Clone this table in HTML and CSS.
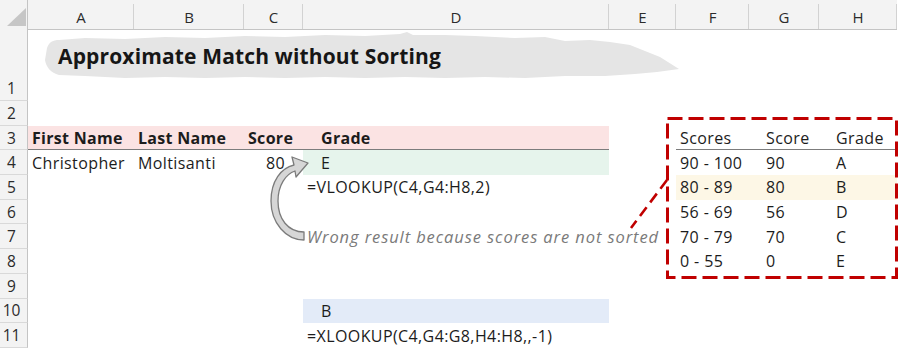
FILE: index.html
```html
<!DOCTYPE html>
<html lang="en">
<head>
<meta charset="utf-8">
<title>Approximate Match without Sorting</title>
<link rel="stylesheet" href="styles.css">
</head>
<body>
<div class="sheet">
  <div class="row colhead">
    <div class="corner"><svg width="28" height="29" viewBox="0 0 28 29"><polygon points="7,26 26,26 26,8" fill="#c6c6c6"/></svg></div>
    <div class="ch">A</div><div class="ch">B</div><div class="ch">C</div><div class="ch">D</div>
    <div class="ch">E</div><div class="ch">F</div><div class="ch">G</div><div class="ch">H</div>
  </div>

  <div class="row r1">
    <div class="rh rh1">1</div>
    <div class="title-cell">
      <svg class="brush" width="634" height="48" viewBox="0 0 634 48">
        <path d="M2 16 C4 10 8 8 14 8 L40 6 L80 7 L120 5 L160 6 L200 4 L240 5 L280 3 L320 4 L355 2 L362 0 L368 3 L400 3 L430 4 L470 6 L500 5 L520 9 L545 8 L565 10 L585 13 L600 19 L615 25 L634 37 L612 40 L590 42 L560 44 L520 44 L480 46 L440 45 L400 46 L360 45 L320 46 L280 45 L240 46 L200 45 L160 46 L120 45 L80 46 L40 44 L14 43 C6 41 1 35 0 28 Z" fill="#e5e5e5"/>
      </svg>
      <span class="title">Approximate Match without Sorting</span>
    </div>
  </div>

  <div class="row">
    <div class="rh">2</div>
    <div class="c"></div><div class="c"></div><div class="c"></div><div class="c"></div>
    <div class="c"></div><div class="c"></div><div class="c"></div><div class="c"></div>
  </div>

  <div class="row">
    <div class="rh">3</div>
    <div class="c hd b">First Name</div>
    <div class="c hd b">Last Name</div>
    <div class="c hd b">Score</div>
    <div class="c hd b ind">Grade</div>
    <div class="c"></div>
    <div class="c th">Scores</div>
    <div class="c th ind2">Score</div>
    <div class="c th ind2">Grade</div>
  </div>

  <div class="row">
    <div class="rh">4</div>
    <div class="c">Christopher</div>
    <div class="c">Moltisanti</div>
    <div class="c num">80</div>
    <div class="c green ind">E</div>
    <div class="c"></div>
    <div class="c">90 - 100</div>
    <div class="c ind2">90</div>
    <div class="c ind2">A</div>
  </div>

  <div class="row">
    <div class="rh">5</div>
    <div class="c"></div><div class="c"></div><div class="c"></div>
    <div class="c formula">=VLOOKUP(C4,G4:H8,2)</div>
    <div class="c"></div>
    <div class="c yellow">80 - 89</div>
    <div class="c yellow ind2">80</div>
    <div class="c yellow ind2">B</div>
  </div>

  <div class="row">
    <div class="rh">6</div>
    <div class="c"></div><div class="c"></div><div class="c"></div><div class="c"></div>
    <div class="c"></div>
    <div class="c">56 - 69</div>
    <div class="c ind2">56</div>
    <div class="c ind2">D</div>
  </div>

  <div class="row">
    <div class="rh">7</div>
    <div class="c"></div><div class="c"></div><div class="c"></div>
    <div class="c formula note">Wrong result because scores are not sorted</div>
    <div class="c"></div>
    <div class="c">70 - 79</div>
    <div class="c ind2">70</div>
    <div class="c ind2">C</div>
  </div>

  <div class="row">
    <div class="rh">8</div>
    <div class="c"></div><div class="c"></div><div class="c"></div><div class="c"></div>
    <div class="c"></div>
    <div class="c">0 - 55</div>
    <div class="c ind2">0</div>
    <div class="c ind2">E</div>
  </div>

  <div class="row">
    <div class="rh">9</div>
    <div class="c"></div><div class="c"></div><div class="c"></div><div class="c"></div>
    <div class="c"></div><div class="c"></div><div class="c"></div><div class="c"></div>
  </div>

  <div class="row">
    <div class="rh">10</div>
    <div class="c"></div><div class="c"></div><div class="c"></div>
    <div class="c blue ind">B</div>
    <div class="c"></div><div class="c"></div><div class="c"></div><div class="c"></div>
  </div>

  <div class="row">
    <div class="rh">11</div>
    <div class="c"></div><div class="c"></div><div class="c"></div>
    <div class="c formula">=XLOOKUP(C4,G4:G8,H4:H8,,-1)</div>
    <div class="c"></div><div class="c"></div><div class="c"></div><div class="c"></div>
  </div>

  <svg class="curved-arrow" width="48" height="92" viewBox="0 0 48 92">
    <path d="M36 87 C18 87 3 70 3 48 C3 28 13 15 26 12 L24 4 L40 10 L28 24 L27 18 C18 21 10 32 10 48 C10 66 20 79 36 79 Z" fill="#d6d6d6" stroke="#7b7b7b" stroke-width="1.3" stroke-linejoin="round"/>
  </svg>

  <svg class="callout" width="280" height="175" viewBox="0 0 280 175">
    <rect x="47.5" y="8.5" width="229" height="159" fill="none" stroke="#c00000" stroke-width="3" stroke-dasharray="15 6"/>
    <line x1="47" y1="70" x2="11" y2="118" stroke="#c00000" stroke-width="2.6" stroke-dasharray="11 6"/>
  </svg>
</div>
</body>
</html>
```

FILE: styles.css
```css
* {
  box-sizing: border-box;
  margin: 0;
  padding: 0;
}

html, body {
  background: #ffffff;
}

body {
  margin: 0;
  width: 900px;
  height: 348px;
  overflow: hidden;
  font-family: "Open Sans", "Liberation Sans", sans-serif;
  color: #1c1c1c;
}

.sheet {
  position: relative;
  width: 900px;
}

.row {
  display: grid;
  grid-template-columns: 28px 106px 110px 59px 306px 67px 73px 70px 78px;
  height: 24.7px;
}

.colhead {
  height: 29px;
}

.corner {
  background: #f3f3f3;
  border-bottom: 1px solid #c4c4c4;
  border-right: 1px solid #c4c4c4;
}

.corner svg {
  display: block;
}

.ch {
  background: #f3f3f3;
  border-bottom: 1px solid #c4c4c4;
  display: flex;
  align-items: center;
  justify-content: center;
  padding-top: 4px;
  font-size: 15px;
  color: #2b2b2b;
  position: relative;
}

.ch::after {
  content: "";
  position: absolute;
  right: 0;
  top: 4px;
  bottom: 0;
  width: 1px;
  background: #d2d2d2;
}

.r1 {
  height: 72px;
}

.rh {
  background: #f3f3f3;
  border-right: 1px solid #c4c4c4;
  border-bottom: 1px solid #d9d9d9;
  display: flex;
  align-items: center;
  justify-content: center;
  padding-right: 4px;
  font-size: 15.5px;
  color: #2b2b2b;
}

.rh1 {
  align-items: flex-end;
  padding-bottom: 1px;
}

.title-cell {
  grid-column: 2 / -1;
  position: relative;
  padding-left: 30px;
  padding-top: 13px;
}

.brush {
  position: absolute;
  left: 17px;
  top: 3px;
}

.title {
  position: relative;
  font-weight: 700;
  font-size: 21px;
  letter-spacing: 0.15px;
  color: #161616;
}

.c {
  display: flex;
  align-items: center;
  padding: 0 4px;
  white-space: nowrap;
  font-size: 16px;
  letter-spacing: 0.4px;
  color: #1c1c1c;
  min-width: 0;
}

.b {
  font-weight: 700;
  letter-spacing: 0.3px;
}

.hd {
  background: #fbe3e3;
  border-bottom: 1px solid #7c7c7c;
}

.th {
  border-bottom: 1px solid #7c7c7c;
}

.ind {
  padding-left: 18px;
}

.ind2 {
  padding-left: 17px;
}

.num {
  justify-content: flex-end;
  padding-right: 18px;
}

.green {
  background: #e6f4ec;
}

.blue {
  background: #e3ebf8;
}

.yellow {
  background: #fdf7e6;
}

.formula {
  padding-left: 4px;
}

.note {
  font-style: italic;
  font-size: 16.5px;
  letter-spacing: 0.9px;
  color: #7a7a7a;
}

.curved-arrow {
  position: absolute;
  left: 268px;
  top: 153px;
}

.callout {
  position: absolute;
  left: 620px;
  top: 110px;
}
```
